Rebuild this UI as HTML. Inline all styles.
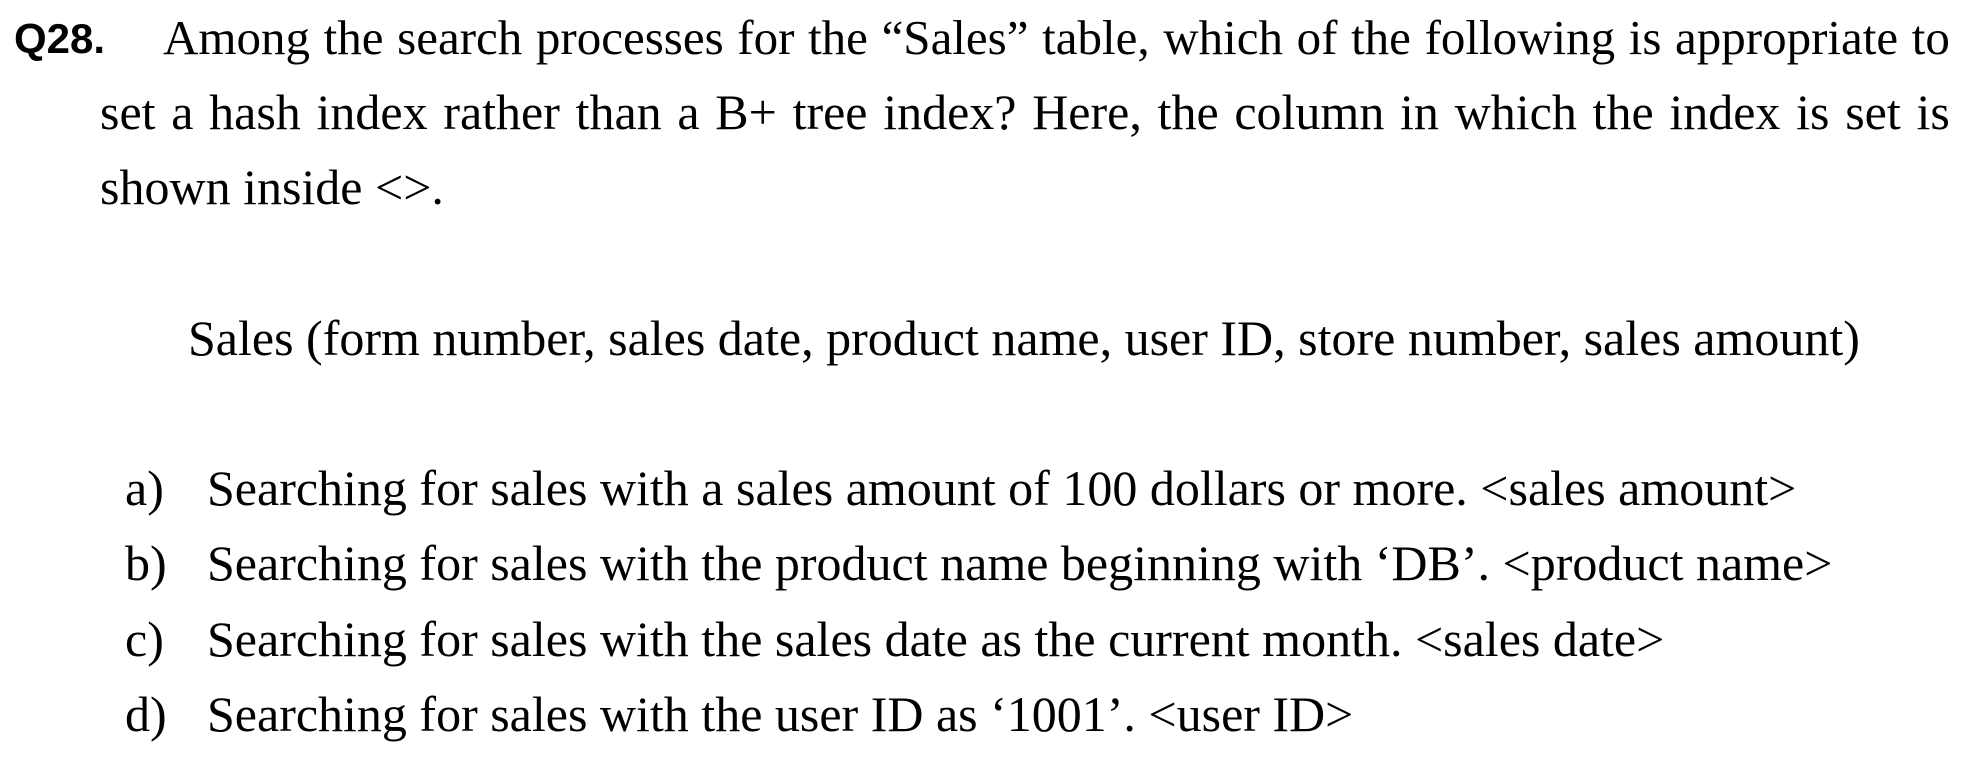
<!DOCTYPE html>
<html><head><meta charset="utf-8"><style>
html,body{margin:0;padding:0;background:#fff;width:1966px;height:758px;overflow:hidden;position:relative}
.l{position:absolute;font-family:"Liberation Serif",serif;font-size:50px;line-height:75px;color:#000;white-space:nowrap}
.f{display:flex;justify-content:space-between}
.q{position:absolute;left:14px;top:1px;font-family:"Liberation Sans",sans-serif;font-weight:bold;font-size:42px;line-height:75px}
</style></head><body>
<div class="q">Q28.</div>
<div class="l f" style="left:163px;top:0px;width:1787px;font-size:49px"><span>Among</span><span>the</span><span>search</span><span>processes</span><span>for</span><span>the</span><span>“Sales”</span><span>table,</span><span>which</span><span>of</span><span>the</span><span>following</span><span>is</span><span>appropriate</span><span>to</span></div>
<div class="l f" style="left:100px;top:75px;width:1850px"><span>set</span><span>a</span><span>hash</span><span>index</span><span>rather</span><span>than</span><span>a</span><span>B+</span><span>tree</span><span>index?</span><span>Here,</span><span>the</span><span>column</span><span>in</span><span>which</span><span>the</span><span>index</span><span>is</span><span>set</span><span>is</span></div>
<div class="l" style="left:100px;top:150px">shown inside &lt;&gt;.</div>
<div class="l" style="left:188px;top:301px">Sales (form number, sales date, product name, user ID, store number, sales amount)</div>
<div class="l" style="left:125px;top:451px">a)</div><div class="l" style="left:207px;top:451px">Searching for sales with a sales amount of 100 dollars or more. &lt;sales amount&gt;</div>
<div class="l" style="left:125px;top:526px">b)</div><div class="l" style="left:207px;top:526px">Searching for sales with the product name beginning with ‘DB’. &lt;product name&gt;</div>
<div class="l" style="left:125px;top:602px">c)</div><div class="l" style="left:207px;top:602px">Searching for sales with the sales date as the current month. &lt;sales date&gt;</div>
<div class="l" style="left:125px;top:677px">d)</div><div class="l" style="left:207px;top:677px">Searching for sales with the user ID as ‘1001’. &lt;user ID&gt;</div>
</body></html>
